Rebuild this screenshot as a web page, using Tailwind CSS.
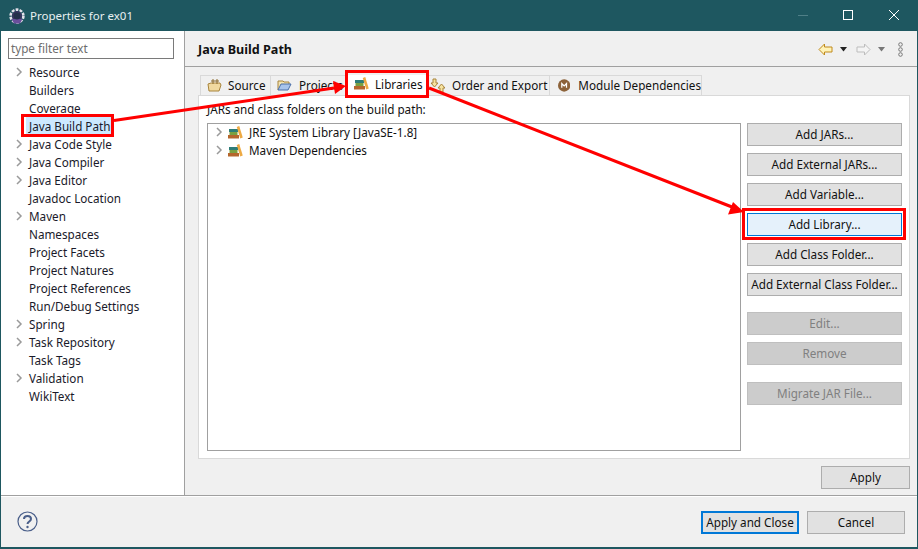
<!DOCTYPE html>
<html>
<head>
<meta charset="utf-8">
<title>Properties for ex01</title>
<script src="https://cdn.jsdelivr.net/npm/@tailwindcss/browser@4"></script>
</head>
<body class="overflow-hidden">
<div class="relative w-[918px] h-[549px] flex flex-col bg-[#f0f0f0] border border-[#1e5760] border-t-0 border-b-2 text-[11.7px] leading-[18px] text-[#111] font-['Noto_Sans','Open_Sans',sans-serif]">

  <!-- title bar -->
  <div class="h-[31px] -mx-px shrink-0 bg-[#1e5760] flex items-center pl-[9px] text-white">
    <svg class="w-[16px] h-[16px]" viewBox="0 0 16 16">
      <circle cx="8" cy="8" r="6.400" fill="none" stroke="#e4e0ea" stroke-width="2.600" stroke-dasharray="2.800 1.200"/>
      <circle cx="8" cy="8" r="5" fill="#3a3560"/>
      <path d="M2.500 11h11l-2.500 4.500h-6z" fill="#6a4f9c"/>
      <circle cx="8" cy="8" r="3.400" fill="#24304a"/>
    </svg>
    <span class="ml-[5px] text-[11.5px] text-[#e8f0f1]">Properties for ex01</span>
    <div class="ml-auto mr-[1px] flex items-center">
      <svg class="w-[46px] h-[31px]" viewBox="0 0 46 31"><path d="M19 15.500h10" stroke="#4f7f87" stroke-width="1"/></svg>
      <svg class="w-[46px] h-[31px]" viewBox="0 0 46 31"><rect x="18.500" y="10.500" width="9" height="9" fill="none" stroke="#fff"/></svg>
      <svg class="w-[46px] h-[31px]" viewBox="0 0 46 31"><path d="M18 10l10 10M28 10l-10 10" stroke="#fff" stroke-width="1"/></svg>
    </div>
  </div>

  <div class="flex flex-1 min-h-0">
    <!-- sidebar -->
    <div class="w-[184px] shrink-0 bg-white border-r border-[#a0a0a0] pt-[7px]">
      <div class="ml-[7px] w-[166px] h-[21px] border border-[#7a7a7a] px-[2px] text-[#6d6d6d] leading-[19px]">type filter text</div>
      <ul class="mt-[4px] text-[#1a1a2a]">
        <li class="h-[18px] pl-[14px] flex items-center"><svg class="w-[8px] h-[10px] mr-[6px]" viewBox="0 0 8 10"><path d="M2 1l4 4-4 4" fill="none" stroke="#9a9a9a" stroke-width="1.500"/></svg>Resource</li>
        <li class="h-[18px] pl-[28px] flex items-center">Builders</li>
        <li class="h-[18px] pl-[28px] flex items-center">Coverage</li>
        <li class="h-[18px] pl-[25px] flex items-center"><span class="bg-[#cce8ff] px-[3px] h-[18px]">Java Build Path</span></li>
        <li class="h-[18px] pl-[14px] flex items-center"><svg class="w-[8px] h-[10px] mr-[6px]" viewBox="0 0 8 10"><path d="M2 1l4 4-4 4" fill="none" stroke="#9a9a9a" stroke-width="1.500"/></svg>Java Code Style</li>
        <li class="h-[18px] pl-[14px] flex items-center"><svg class="w-[8px] h-[10px] mr-[6px]" viewBox="0 0 8 10"><path d="M2 1l4 4-4 4" fill="none" stroke="#9a9a9a" stroke-width="1.500"/></svg>Java Compiler</li>
        <li class="h-[18px] pl-[14px] flex items-center"><svg class="w-[8px] h-[10px] mr-[6px]" viewBox="0 0 8 10"><path d="M2 1l4 4-4 4" fill="none" stroke="#9a9a9a" stroke-width="1.500"/></svg>Java Editor</li>
        <li class="h-[18px] pl-[28px] flex items-center">Javadoc Location</li>
        <li class="h-[18px] pl-[14px] flex items-center"><svg class="w-[8px] h-[10px] mr-[6px]" viewBox="0 0 8 10"><path d="M2 1l4 4-4 4" fill="none" stroke="#9a9a9a" stroke-width="1.500"/></svg>Maven</li>
        <li class="h-[18px] pl-[28px] flex items-center">Namespaces</li>
        <li class="h-[18px] pl-[28px] flex items-center">Project Facets</li>
        <li class="h-[18px] pl-[28px] flex items-center">Project Natures</li>
        <li class="h-[18px] pl-[28px] flex items-center">Project References</li>
        <li class="h-[18px] pl-[28px] flex items-center">Run/Debug Settings</li>
        <li class="h-[18px] pl-[14px] flex items-center"><svg class="w-[8px] h-[10px] mr-[6px]" viewBox="0 0 8 10"><path d="M2 1l4 4-4 4" fill="none" stroke="#9a9a9a" stroke-width="1.500"/></svg>Spring</li>
        <li class="h-[18px] pl-[14px] flex items-center"><svg class="w-[8px] h-[10px] mr-[6px]" viewBox="0 0 8 10"><path d="M2 1l4 4-4 4" fill="none" stroke="#9a9a9a" stroke-width="1.500"/></svg>Task Repository</li>
        <li class="h-[18px] pl-[28px] flex items-center">Task Tags</li>
        <li class="h-[18px] pl-[14px] flex items-center"><svg class="w-[8px] h-[10px] mr-[6px]" viewBox="0 0 8 10"><path d="M2 1l4 4-4 4" fill="none" stroke="#9a9a9a" stroke-width="1.500"/></svg>Validation</li>
        <li class="h-[18px] pl-[28px] flex items-center">WikiText</li>
      </ul>
    </div>

    <!-- main -->
    <div class="flex-1 flex flex-col min-w-0">
      <div class="h-[36px] shrink-0 border-b border-[#a0a0a0] flex items-center pl-[13px] pr-[14px] pt-[3px]">
        <span class="font-bold text-[12.600px] text-[#111]">Java Build Path</span>
        <div class="ml-auto -mt-[2px] flex items-center">
          <svg class="w-[15px] h-[13px]" viewBox="0 0 15 13"><path d="M1 6.500L6.500 1v3h7.500v5H6.500v3z" fill="#fff3b8" stroke="#c08a1c"/></svg>
          <svg class="ml-[7px] w-[7px] h-[5px]" viewBox="0 0 7 5"><path d="M0 0h7L3.500 4.500z" fill="#222"/></svg>
          <svg class="ml-[9px] w-[15px] h-[13px]" viewBox="0 0 15 13"><path d="M14 6.500L8.500 1v3H1v5h7.500v3z" fill="#f4f4f4" stroke="#bdbdbd"/></svg>
          <svg class="ml-[7px] w-[7px] h-[5px]" viewBox="0 0 7 5"><path d="M0 0h7L3.500 4.500z" fill="#777"/></svg>
          <svg class="ml-[13px] w-[5px] h-[15px]" viewBox="0 0 5 15"><g fill="none" stroke="#777"><circle cx="2.500" cy="2.500" r="1.800"/><circle cx="2.500" cy="7.500" r="1.800"/><circle cx="2.500" cy="12.500" r="1.800"/></g></svg>
        </div>
      </div>

      <div class="flex-1 flex flex-col pl-[13px] pr-[7px] pt-[8px]">
        <!-- tabs -->
        <div class="flex h-[20px] shrink-0 pl-[2px] whitespace-nowrap">
          <div class="w-[71px] flex items-center pl-[6px] pb-[1px] bg-[#f0f0f0] border border-b-0 border-[#d9d9d9] gap-[6px]">
            <svg class="w-[15px] h-[14px]" viewBox="0 0 15 14"><path d="M1 6l3-1h9l1 2-2 6H2z" fill="#f0d9a0" stroke="#a8843c"/><path d="M6 1v5M10 1v5M4 3h8" stroke="#8a6a2c"/></svg>
            <span>Source</span>
          </div>
          <div class="w-[75px] flex items-center pl-[6px] pb-[1px] bg-[#f0f0f0] border border-l-0 border-b-0 border-[#d9d9d9] gap-[7px]">
            <svg class="w-[15px] h-[14px]" viewBox="0 0 15 14"><path d="M1 12V3h5l1 1h5v2" fill="#f3e3b0" stroke="#a8843c"/><path d="M1 12l3-6h10l-3 6z" fill="#a8c4ec" stroke="#4a6fa8"/></svg>
            <span>Projects</span>
          </div>
          <div class="w-[82px] flex items-center pl-[8px] pb-[3px] bg-white gap-[6px]">
            <svg class="w-[15px] h-[13px]" viewBox="0 0 15 13"><path d="M1 3h9v3H1z" fill="#2e7d78"/><path d="M1.500 6h8v3h-8z" fill="#7aa040"/><path d="M0 9h11v3.500H0z" fill="#b5662c"/><path d="M10 .500l3.500 11.500" stroke="#eeaa44" stroke-width="2.600" fill="none"/></svg>
            <span>Libraries</span>
          </div>
          <div class="w-[122px] flex items-center pl-[2px] pb-[1px] bg-[#f0f0f0] border border-l-0 border-b-0 border-[#d9d9d9] gap-[7px]">
            <svg class="w-[15px] h-[15px]" viewBox="0 0 15 15"><path d="M3 1h3v4h2L4.500 9 1 5h2z" fill="#f6e3a0" stroke="#a8843c"/><path d="M10 14v-4H8l3.500-4L15 10h-2v4z" fill="#f6e3a0" stroke="#a8843c"/></svg>
            <span>Order and Export</span>
          </div>
          <div class="w-[152px] flex items-center pl-[8px] pb-[1px] bg-[#f0f0f0] border border-l-0 border-b-0 border-[#d9d9d9] gap-[8px]">
            <svg class="w-[13px] h-[13px]" viewBox="0 0 13 13"><circle cx="6.500" cy="6.500" r="6.500" fill="#8c6239"/><path d="M4 9V4.500l2.500 2.500L9 4.500V9" fill="none" stroke="#fff" stroke-width="1.300"/></svg>
            <span>Module Dependencies</span>
          </div>
        </div>

        <!-- tab panel -->
        <div class="h-[364px] shrink-0 bg-white border border-[#d9d9d9] pl-[8px] pr-[7px] pt-[4px]">
          <div class="h-[18px] text-[#111]">JARs and class folders on the build path:</div>
          <div class="flex mt-[5px] gap-[6px]">
            <div class="w-[534px] h-[328px] border border-[#a0a0a0] pl-[7px]">
              <div class="h-[18px] -mt-[1px] flex items-center">
                <svg class="w-[8px] h-[10px] mr-[5px]" viewBox="0 0 8 10"><path d="M2 1l4 4-4 4" fill="none" stroke="#9a9a9a" stroke-width="1.500"/></svg>
                <svg class="w-[15px] h-[13px] mr-[6px]" viewBox="0 0 15 13"><path d="M1 3h9v3H1z" fill="#2e7d78"/><path d="M1.500 6h8v3h-8z" fill="#7aa040"/><path d="M0 9h11v3.500H0z" fill="#b5662c"/><path d="M10 .500l3.500 11.500" stroke="#eeaa44" stroke-width="2.600" fill="none"/></svg>
                <span>JRE System Library [JavaSE-1.8]</span>
              </div>
              <div class="h-[18px] flex items-center">
                <svg class="w-[8px] h-[10px] mr-[5px]" viewBox="0 0 8 10"><path d="M2 1l4 4-4 4" fill="none" stroke="#9a9a9a" stroke-width="1.500"/></svg>
                <svg class="w-[15px] h-[13px] mr-[6px]" viewBox="0 0 15 13"><path d="M1 3h9v3H1z" fill="#2e7d78"/><path d="M1.500 6h8v3h-8z" fill="#7aa040"/><path d="M0 9h11v3.500H0z" fill="#b5662c"/><path d="M10 .500l3.500 11.500" stroke="#eeaa44" stroke-width="2.600" fill="none"/></svg>
                <span>Maven Dependencies</span>
              </div>
            </div>
            <div class="w-[155px] flex flex-col">
              <button class="h-[23px] pb-[1px] bg-[#e1e1e1] border border-[#adadad]">Add JARs...</button>
              <button class="mt-[7px] h-[23px] pb-[1px] bg-[#e1e1e1] border border-[#adadad]">Add External JARs...</button>
              <button class="mt-[7px] h-[23px] pb-[1px] bg-[#e1e1e1] border border-[#adadad]">Add Variable...</button>
              <button class="mt-[7px] h-[23px] pb-[1px] bg-[#e5f1fb] border border-[#0078d7]">Add Library...</button>
              <button class="mt-[7px] h-[23px] pb-[1px] bg-[#e1e1e1] border border-[#adadad]">Add Class Folder...</button>
              <button class="mt-[7px] h-[23px] pb-[1px] bg-[#e1e1e1] border border-[#adadad]">Add External Class Folder...</button>
              <button class="mt-[16px] h-[23px] pb-[1px] bg-[#cccccc] border border-[#bfbfbf] text-[#808080]">Edit...</button>
              <button class="mt-[7px] h-[23px] pb-[1px] bg-[#cccccc] border border-[#bfbfbf] text-[#808080]">Remove</button>
              <button class="mt-[17px] h-[23px] pb-[1px] bg-[#cccccc] border border-[#bfbfbf] text-[#808080]">Migrate JAR File...</button>
            </div>
          </div>
        </div>

        <div class="flex justify-end mt-[7px]">
          <button class="w-[89px] h-[23px] pb-[1px] bg-[#e1e1e1] border border-[#adadad]">Apply</button>
        </div>
      </div>
    </div>
  </div>

  <!-- footer -->
  <div class="h-[52px] shrink-0 border-t border-[#a0a0a0] flex items-center pl-[16px] pr-[12px] pt-[2px] shadow-[inset_0_1px_0_#fff]">
    <svg class="w-[21px] h-[21px] -mt-[3px]" viewBox="0 0 21 21">
      <circle cx="10.500" cy="10.500" r="9.500" fill="none" stroke="#4a5f8a" stroke-width="1.200"/>
      <path d="M7 8c0-2 1.500-3 3.500-3s3.500 1 3.500 3c0 2.500-3.500 2.500-3.500 5" fill="none" stroke="#4a5f8a" stroke-width="2"/>
      <circle cx="10.500" cy="16" r="1.200" fill="#4a5f8a"/>
    </svg>
    <button class="ml-auto w-[98px] h-[23px] pb-[1px] bg-[#e1e1e1] border-2 border-[#0078d7]">Apply and Close</button>
    <button class="ml-[8px] w-[98px] h-[23px] pb-[1px] bg-[#e1e1e1] border border-[#adadad]">Cancel</button>
  </div>

  <!-- red annotations on top of the dialog -->
  <svg class="absolute left-[-1px] top-0 w-[918px] h-[549px] pointer-events-none" viewBox="0 0 918 549">
    <g fill="none" stroke="#ff0000" stroke-width="3">
      <rect x="22.500" y="115.500" width="90" height="20"/>
      <rect x="346.500" y="71.500" width="81" height="25"/>
      <rect x="743.500" y="209.500" width="161" height="29"/>
    </g>
    <path d="M114 120.500L334 88" stroke="#ff0000" stroke-width="3"/>
    <path d="M346 86L333 81l2 13z" fill="#ff0000"/>
    <path d="M429 88L732 207" stroke="#ff0000" stroke-width="3"/>
    <path d="M744 212L728 214.500l5-12.500z" fill="#ff0000"/>
  </svg>
</div>
</body>
</html>
